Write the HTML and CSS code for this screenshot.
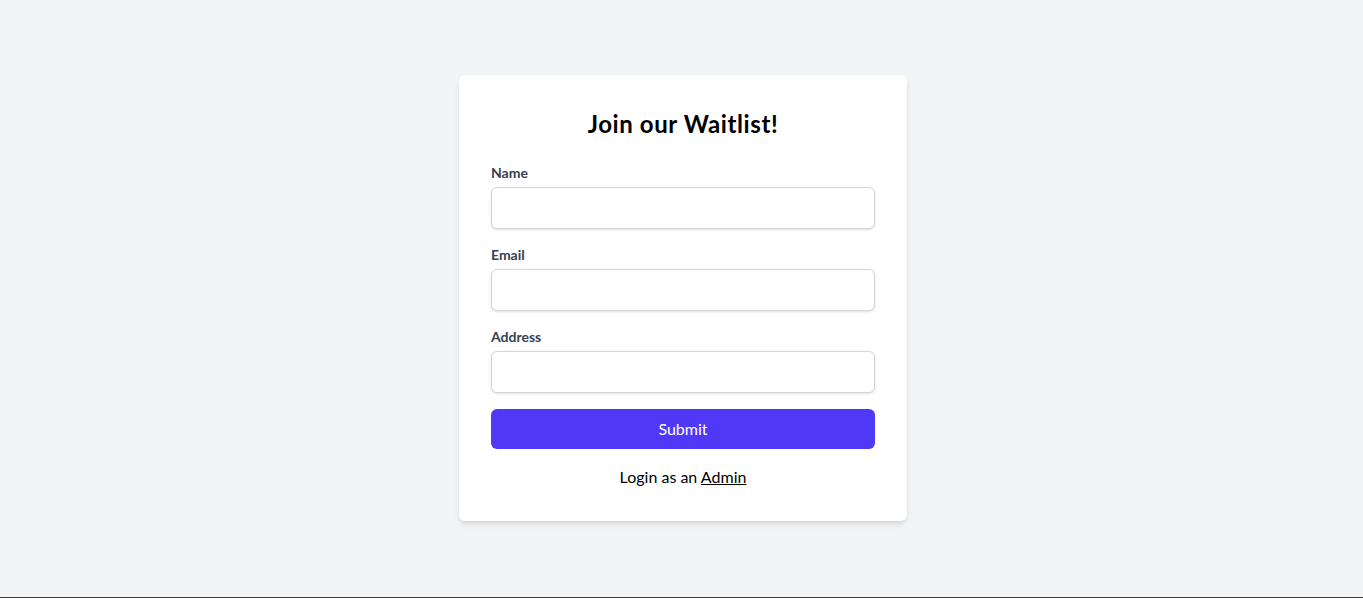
FILE: index.html
```html
<!DOCTYPE html>
<html lang="en">
<head>
<meta charset="utf-8">
<title>Join our Waitlist</title>
<link rel="stylesheet" href="styles.css">
</head>
<body>
<main class="page">
  <div class="card">
    <h1 class="title">Join our Waitlist!</h1>
    <form class="form">
      <div class="field">
        <label class="label" for="name">Name</label>
        <input class="input" id="name" type="text">
      </div>
      <div class="field">
        <label class="label" for="email">Email</label>
        <input class="input" id="email" type="email">
      </div>
      <div class="field">
        <label class="label" for="address">Address</label>
        <input class="input" id="address" type="text">
      </div>
      <button class="submit" type="button">Submit</button>
    </form>
    <p class="login">Login as an <a class="link" href="#">Admin</a></p>
  </div>
</main>
</body>
</html>
```

FILE: styles.css
```css
* { box-sizing: border-box; }
html, body { margin: 0; padding: 0; }
body {
  font-family: "Lato", "Noto Sans", sans-serif;
  background: #f3f4f6;
  color: #000;
}
.page {
  min-height: 100vh;
  display: flex;
  align-items: center;
  justify-content: center;
  padding: 0 0 2px 3px;
  border-bottom: 1px solid #3a3a40;
}
.card {
  width: 448px;
  background: #fff;
  border-radius: 6px;
  padding: 32px;
  box-shadow: 0 4px 6px -1px rgba(0,0,0,0.1), 0 2px 4px -2px rgba(0,0,0,0.1);
}
.title {
  margin: 0 0 24px;
  font-size: 24px;
  line-height: 32px;
  font-weight: 700;
  letter-spacing: 0.6px;
  text-align: center;
  position: relative;
  top: 1px;
}
.form { margin: 0; }
.field { margin-bottom: 16px; }
.label {
  display: block;
  font-size: 14px;
  line-height: 20px;
  font-weight: 700;
  color: #364153;
  margin-bottom: 4px;
}
.input {
  display: block;
  width: 100%;
  height: 42px;
  padding: 8px 12px;
  font: inherit;
  font-size: 16px;
  line-height: 24px;
  border: 1px solid #d1d5dc;
  border-radius: 6px;
  box-shadow: 0 1px 3px 0 rgba(0,0,0,0.1), 0 1px 2px -1px rgba(0,0,0,0.1);
  outline: none;
  background: #fff;
}
.submit {
  display: block;
  width: 100%;
  height: 40px;
  padding: 8px 16px;
  border: 0;
  border-radius: 6px;
  background: #4f39f6;
  color: #fff;
  font: inherit;
  font-size: 16px;
  line-height: 24px;
  cursor: pointer;
}
.login {
  margin: 16px 0 0;
  text-align: center;
  font-size: 16px;
  line-height: 24px;
}
.link { color: #000; text-decoration: underline; }
```
